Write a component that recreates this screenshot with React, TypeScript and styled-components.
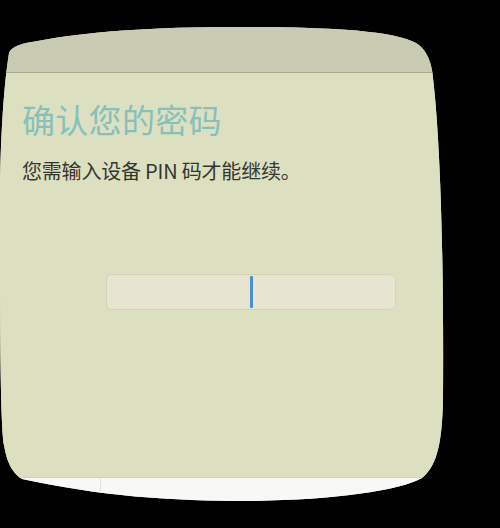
import React from 'react';
import styled, { createGlobalStyle } from 'styled-components';

const GlobalStyle = createGlobalStyle`
  html, body {
    margin: 0;
    padding: 0;
    background: #000;
  }
  body {
    font-family: "Noto Sans CJK SC", "Noto Sans", sans-serif;
  }
`;

// outline of the photographed screen, slightly bulged
const SCREEN_SHAPE =
  "path('M 9 53 Q 12 45 32 42 C 100 29, 170 27, 250 27 C 330 27, 395 31, 416 43 Q 428 50 432 70 C 440 130, 444 250, 443 400 C 442 440, 438 465, 422 478 C 400 491, 330 500, 250 501 C 170 501, 100 496, 22 479 Q 8 471 4 445 C 0 420, 0 300, 0 200 C 0 150, 3 90, 9 53 Z')";

const Screen = styled.div`
  width: 500px;
  height: 528px;
  display: flex;
  flex-direction: column;
  clip-path: ${SCREEN_SHAPE};
  background: #dce0c1;
`;

const TopBar = styled.div`
  height: 72px;
  flex-shrink: 0;
  background: #c9ccb3;
  border-bottom: 1px solid #a4a892;
`;

const Content = styled.div`
  flex: 1;
  display: flex;
  flex-direction: column;
  padding: 27px 0 0 22px;
  background: #dce0c1;
`;

const Title = styled.h1`
  margin: 0;
  font-size: 33px;
  line-height: 38px;
  font-weight: 400;
  color: #85c0bc;
  letter-spacing: 0.3px;
`;

const Hint = styled.p`
  margin: 20px 0 0;
  font-size: 20px;
  line-height: 26px;
  color: #35362f;
  letter-spacing: -0.2px;
`;

const PinField = styled.div`
  margin: 90px 0 0 84px;
  width: 288px;
  height: 34px;
  display: flex;
  align-items: center;
  justify-content: center;
  background: #e7e4d0;
  border: 1px solid #d3d3ba;
  border-radius: 6px;
`;

const Caret = styled.span`
  width: 3px;
  height: 32px;
  margin-left: 1px;
  border-radius: 1px;
  background: #4a8fd4;
`;

const BottomBar = styled.div`
  height: 50px;
  flex-shrink: 0;
  background: #f8f8f6;
  border-top: 1px solid #cfd1bd;
  display: flex;
`;

const Seam = styled.span`
  width: 1px;
  height: 18px;
  margin-left: 100px;
  background: #e2e2dc;
`;

const App = () => {
  return (
    <>
      <GlobalStyle />
      <Screen>
        <TopBar />
        <Content>
          <Title>确认您的密码</Title>
          <Hint>您需输入设备 PIN 码才能继续。</Hint>
          <PinField>
            <Caret />
          </PinField>
        </Content>
        <BottomBar>
          <Seam />
        </BottomBar>
      </Screen>
    </>
  );
};

export default App;
